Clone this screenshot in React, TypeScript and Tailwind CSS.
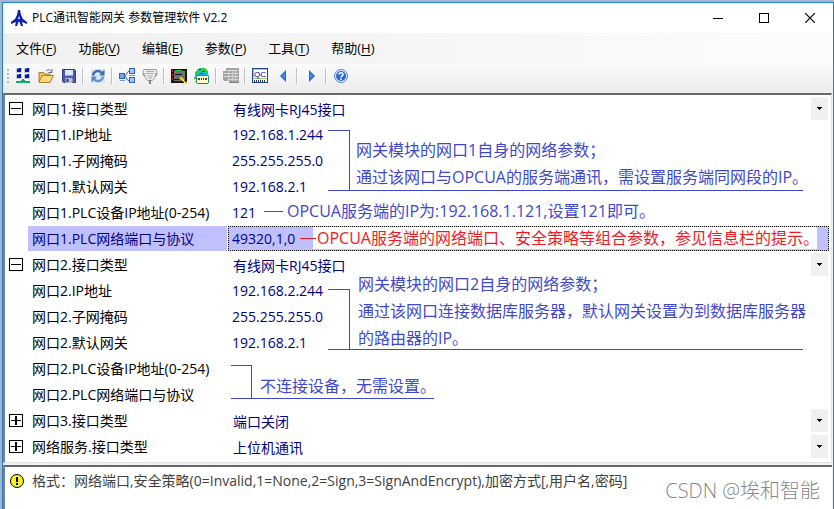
import React, { useState } from 'react'

type Row = {
  id: string
  name: string
  value: string
  kind: 'select' | 'text'
  open?: boolean
}

const rows: Row[] = [
  { id: 'p1-type', name: '网口1.接口类型', value: '有线网卡RJ45接口', kind: 'select', open: true },
  { id: 'p1-ip', name: '网口1.IP地址', value: '192.168.1.244', kind: 'text' },
  { id: 'p1-mask', name: '网口1.子网掩码', value: '255.255.255.0', kind: 'text' },
  { id: 'p1-gw', name: '网口1.默认网关', value: '192.168.2.1', kind: 'text' },
  { id: 'p1-plc', name: '网口1.PLC设备IP地址(0-254)', value: '121', kind: 'text' },
  { id: 'p1-port', name: '网口1.PLC网络端口与协议', value: '49320,1,0', kind: 'text' },
  { id: 'p2-type', name: '网口2.接口类型', value: '有线网卡RJ45接口', kind: 'select', open: true },
  { id: 'p2-ip', name: '网口2.IP地址', value: '192.168.2.244', kind: 'text' },
  { id: 'p2-mask', name: '网口2.子网掩码', value: '255.255.255.0', kind: 'text' },
  { id: 'p2-gw', name: '网口2.默认网关', value: '192.168.2.1', kind: 'text' },
  { id: 'p2-plc', name: '网口2.PLC设备IP地址(0-254)', value: '', kind: 'text' },
  { id: 'p2-port', name: '网口2.PLC网络端口与协议', value: '', kind: 'text' },
  { id: 'p3-type', name: '网口3.接口类型', value: '端口关闭', kind: 'select', open: false },
  { id: 'svc-type', name: '网络服务.接口类型', value: '上位机通讯', kind: 'select', open: false },
]

const menus = [
  { text: '文件', key: 'F' },
  { text: '功能', key: 'V' },
  { text: '编辑', key: 'E' },
  { text: '参数', key: 'P' },
  { text: '工具', key: 'T' },
  { text: '帮助', key: 'H' },
]

function Pixels({ children }: { children: React.ReactNode }) {
  return (
    <svg width="16" height="16" viewBox="0 0 16 16" shapeRendering="crispEdges" aria-hidden="true">
      {children}
    </svg>
  )
}

function Smooth({ children }: { children: React.ReactNode }) {
  return (
    <svg width="16" height="16" viewBox="0 0 16 16" fill="none" aria-hidden="true">
      {children}
    </svg>
  )
}

const NetworkIcon = () => (
  <Pixels>
    {[
      [1, 0],
      [9, 0],
      [1, 6],
      [9, 6],
    ].map(([x, y]) => (
      <g key={`${x}-${y}`}>
        <rect x={x} y={y} width="6" height="5" fill="#c4c8d4" />
        <rect x={x + 1} y={y} width="4" height="4" fill="#1414b4" />
        <rect x={x + 1} y={y} width="2" height="1" fill="#60a0ff" />
      </g>
    ))}
    <path d="M7 11h2v1h1v1h5v2H1v-2h5v-1h1z" fill="#18a868" />
  </Pixels>
)

const FolderIcon = () => (
  <Smooth>
    <path d="M1 14V4.5h4.5l1 1.5H12v2" fill="#f0c860" stroke="#a87820" />
    <path d="M1 14.5l3-7h11.5l-3.5 7z" fill="#fbd878" stroke="#b08028" />
    <path d="M8 3c2-2 4-1.500 5 .5M14 1v3.500h-3.500" stroke="#506890" />
  </Smooth>
)

const SaveIcon = () => (
  <Smooth>
    <path d="M1.500 1.500h12l1 1v12h-12l-1-1z" fill="#4e58b8" stroke="#343c90" />
    <path d="M4 2h8v5.500H4z" fill="#dce6f8" />
    <path d="M4.500 10h7v5h-7z" fill="#b8c0d0" />
    <path d="M5.500 11h2v3h-2z" fill="#30386c" />
  </Smooth>
)

const RefreshIcon = () => (
  <Smooth>
    <path d="M1 1h14v14H1z" fill="#dbe7f5" />
    <path d="M3 7.500a5 5 0 0 1 9-2.500" stroke="#3f70ae" strokeWidth="2.500" />
    <path d="M14.500 1.500v6H9z" fill="#3f70ae" />
    <path d="M13 8.500a5 5 0 0 1-9 2.500" stroke="#6796cc" strokeWidth="2.500" />
    <path d="M1.500 14.500v-6H7z" fill="#5585c0" />
  </Smooth>
)

const TopologyIcon = () => (
  <Smooth>
    <path d="M6 8.500l3-5h2M6 8.500l3 4h2" stroke="#3464b4" />
    <rect x=".5" y="5.500" width="5" height="5" fill="#78a4e8" stroke="#3464b4" />
    <rect x="10.500" y=".5" width="5" height="5" fill="#a4c4f4" stroke="#3464b4" />
    <rect x="10.500" y="9.500" width="5" height="5" fill="#a4c4f4" stroke="#3464b4" />
    <path d="M1 12.500h5M10 7.500h6" stroke="#7898cc" />
  </Smooth>
)

const PlugIcon = () => (
  <Smooth>
    <path d="M2 1.500h12l1 2v3l-2 1v2l-2.500 3h-5L3 9.500v-2l-2-1v-3z" fill="#eeeeee" stroke="#989898" />
    <path d="M4 3.500h8M4 5.500h8M5 8h6M6 10h4" stroke="#aaaaaa" />
    <path d="M8 12v4" stroke="#808080" strokeWidth="2" />
    <path d="M2 5v3M14 5v3" stroke="#6088b8" />
  </Smooth>
)

const BoardIcon = () => (
  <Pixels>
    <path d="M0 1h16v14H0z" fill="#181818" />
    <path d="M3 3h11v10H3z" fill="#707070" />
    <path d="M4 2h7v1H4zM12 3h2v2h-2z" fill="#20c040" />
    <path d="M1 2h1v2H1zM1 6h1v2H1zM1 10h1v2H1z" fill="#d02020" />
    <path d="M4 6h7v1H4zM3 11h5v1H3z" fill="#101010" />
    <path d="M9 9h2v1h1v1h1v1h1v1h1v1h1v2h-2v-1h-1v-1h-1v-1h-1v-1h-1v-1H9z" fill="#e8d830" />
    <path d="M13 12h1v1h1v1h-1v-1h-1z" fill="#806000" />
  </Pixels>
)

const GlobeIcon = () => (
  <Pixels>
    <path d="M5 0h6v1h2v2h1v4h1v3H1V5h1V3h1V1h2z" fill="#18b8e8" />
    <path d="M3 2h3v2H5v2H1V4h2zM7 0h4v1h2v2h1v3h-3V4H8V2H7z" fill="#20d830" />
    <path d="M5 1h2v1H5zM8 3h3v1H8zM6 5h4v1H6z" fill="#1040c0" />
    <path d="M3 7h10l1 2v6H3z" fill="#ffffc8" />
    <path d="M3 7h10v1H3zM3 15h11v1H3zM2 9h1v6H2zM14 9h1v6h-1z" fill="#308050" />
    <path d="M4 10h2v2H4zM7 10h1v2H7zM9 10h1v2H9zM11 10h2v2h-2z" fill="#405040" />
    <path d="M0 9h2v2H0zM1 13h2v1H1z" fill="#20d830" />
  </Pixels>
)

const SheetIcon = () => (
  <Pixels>
    <path d="M3 0h13v14H6v-1H1v-1H0V3h3z" fill="#a4a4a4" />
    <path d="M4 2h11v1H4zM1 5h14v1H1zM1 8h14v1H1zM5 11h10v1H5z" fill="#dcdcdc" />
    <path d="M5 3h1v10H5zM9 3h1v10H9zM12 3h1v10h-1z" fill="#cfcfcf" />
    <path d="M6 14h10v1H6z" fill="#808080" />
  </Pixels>
)

const QcIcon = () => (
  <svg width="16" height="16" viewBox="0 0 16 16" aria-hidden="true">
    <g shapeRendering="crispEdges">
      <path d="M0 0h16v15H0z" fill="#24488c" />
      <path d="M1 1h14v10H1z" fill="#a8d080" />
      <path d="M2 2h13v8H2z" fill="#ffffff" />
      <path d="M1 11h14v3H1z" fill="#f4f4f4" />
      <path d="M2 12h1v2H2zM4 12h1v2H4zM6 12h1v2H6zM8 12h1v2H8zM10 12h1v2h-1zM12 12h1v2h-1z" fill="#303848" />
    </g>
    <text x="8" y="9" textAnchor="middle" fontSize="8" fontFamily="Liberation Sans, sans-serif" fill="#000080">
      QC
    </text>
  </svg>
)

const PrevIcon = () => (
  <Smooth>
    <path d="M11 2v12L5 8z" fill="#2868dc" />
    <path d="M10 5v5L7 8z" fill="#4c94f4" />
  </Smooth>
)

const NextIcon = () => (
  <Smooth>
    <path d="M5 2v12l6-6z" fill="#2868dc" />
    <path d="M6 5v5l3-2z" fill="#4c94f4" />
  </Smooth>
)

const HelpIcon = () => (
  <Smooth>
    <circle cx="8" cy="8" r="6.500" fill="#e0ecfc" stroke="#5484d0" />
    <circle cx="8" cy="8" r="5" fill="#2868d0" />
    <path d="M6 6.500c0-2.500 4-2.500 4 0 0 1.300-2 1.300-2 3" stroke="#fff" strokeWidth="1.500" />
    <path d="M7.200 10.500h1.600v1.500H7.200z" fill="#fff" />
  </Smooth>
)

const toolGroups = [
  [
    { label: '网络', Icon: NetworkIcon },
    { label: '打开', Icon: FolderIcon },
    { label: '保存', Icon: SaveIcon },
  ],
  [{ label: '刷新', Icon: RefreshIcon }],
  [
    { label: '拓扑', Icon: TopologyIcon },
    { label: '串口', Icon: PlugIcon },
  ],
  [
    { label: '模块', Icon: BoardIcon },
    { label: '远程', Icon: GlobeIcon },
  ],
  [{ label: '表格', Icon: SheetIcon }],
  [
    { label: 'QC', Icon: QcIcon },
    { label: '上一个', Icon: PrevIcon },
  ],
  [{ label: '下一个', Icon: NextIcon }],
  [{ label: '关于', Icon: HelpIcon }],
]

function TitleBar() {
  return (
    <header className="flex h-[30px] items-center bg-white pl-2">
      <svg width="16" height="16" viewBox="0 0 16 16" aria-hidden="true">
        <path d="M7 0h2l1 5 2 4 4 3v2l-5-2 1 4h-2l-2-5-2 5H4l1-4-5 2v-2l4-3 2-4z" fill="#0c20b0" />
        <path d="M8 6l1 3H7z" fill="#fff" />
      </svg>
      <h1 className="flex-1 pl-[5px] text-[12px]">PLC通讯智能网关 参数管理软件 V2.2</h1>
      <div className="flex h-full">
        <button aria-label="最小化" className="flex w-[46px] items-center justify-center">
          <svg width="10" height="10" shapeRendering="crispEdges">
            <path d="M0 5h10v1H0z" />
          </svg>
        </button>
        <button aria-label="最大化" className="flex w-[46px] items-center justify-center">
          <svg width="10" height="10" fill="none" stroke="#000">
            <rect x=".5" y=".5" width="9" height="9" />
          </svg>
        </button>
        <button aria-label="关闭" className="flex w-[46px] items-center justify-center">
          <svg width="10" height="10" stroke="#000" strokeWidth="1.200">
            <path d="M0 0l10 10M10 0L0 10" />
          </svg>
        </button>
      </div>
    </header>
  )
}

function MenuBar() {
  return (
    <nav className="flex h-[31px] items-center gap-[22px] bg-gradient-to-r from-[#f0f0f0] to-[#fcfcfc] pb-px pl-[13px] text-[13px]">
      {menus.map((m) => (
        <button key={m.key} className="whitespace-nowrap">
          {m.text}(<span className="underline underline-offset-2">{m.key}</span>)
        </button>
      ))}
    </nav>
  )
}

function ToolBar() {
  return (
    <div role="toolbar" className="flex h-[29px] items-center bg-gradient-to-b from-[#fbfbfb] to-[#ebebeb] pb-[6px] pl-1">
      <span className="mr-[2px] h-[14px] w-[2px] border-l-2 border-dotted border-[#b4b4b4]" />
      {toolGroups.map((group, i) => (
        <div key={i} className="flex items-center">
          {i > 0 && <span className="mx-[2px] h-4 w-[2px] border-r border-white bg-[#c0c0c0]" />}
          {group.map(({ label, Icon }) => (
            <button key={label} aria-label={label} className="flex w-[23px] justify-center">
              <Icon />
            </button>
          ))}
        </div>
      ))}
    </div>
  )
}

function Toggle({ open, label }: { open: boolean; label: string }) {
  return (
    <button aria-label={label} aria-expanded={open} className="block">
      <svg width="14" height="13" shapeRendering="crispEdges" fill="none" stroke="#000">
        <rect x=".5" y=".5" width="13" height="12" />
        <path d="M2 6.500h10" />
        {!open && <path d="M7 2v9" strokeWidth="2" />}
      </svg>
    </button>
  )
}

function GridRow({ row, selected, onSelect }: { row: Row; selected: boolean; onSelect: () => void }) {
  return (
    <div className="flex h-[26px] pb-px" onClick={onSelect}>
      <div className="flex w-[23px] shrink-0 items-center pl-1">
        {row.kind === 'select' && <Toggle open={!!row.open} label={row.name} />}
      </div>
      <label
        htmlFor={row.id}
        className={`flex w-[199px] shrink-0 items-center pl-1 whitespace-nowrap ${
          selected ? 'bg-[#c0c0ff] text-[#000080]' : 'text-black'
        }`}
      >
        {row.name}
      </label>
      <div
        className={`ml-px flex min-w-0 flex-1 items-center border pl-[3px] text-[#000080] ${
          selected ? 'border-dotted border-black bg-[#c0c0ff]' : 'border-transparent'
        }`}
      >
        {row.kind === 'select' ? (
          <div className="relative h-full w-full">
            <select id={row.id} className="h-full w-full appearance-none bg-transparent pt-[2px] pl-px outline-none">
              <option>{row.value}</option>
            </select>
            <span className="pointer-events-none absolute inset-y-0 right-0 flex w-[17px] items-center justify-center bg-[#f0f0f0]">
              <svg width="5" height="3" shapeRendering="crispEdges">
                <path d="M0 0h5v1H4v1H3v1H2V2H1V1H0z" />
              </svg>
            </span>
          </div>
        ) : (
          <input id={row.id} defaultValue={row.value} className="h-full w-full bg-transparent outline-none" />
        )}
      </div>
    </div>
  )
}

/* Remarks drawn over the grid */
function Notes() {
  return (
    <div className="pointer-events-none absolute inset-0 text-[16px] leading-[27px] whitespace-nowrap text-[#3f48cc]">
      <div className="absolute top-[35px] left-[323px] flex h-[61px] w-[475px] border-b border-[#3f48cc]">
        <span className="w-[22px] shrink-0 border-t border-r border-[#3f48cc]" />
        <p className="pt-[7px] pl-[6px]">
          网关模块的网口1自身的网络参数；
          <br />
          通过该网口与OPCUA的服务端通讯，需设置服务端同网段的IP。
        </p>
      </div>
      <div className="absolute top-[103px] left-[259px] flex items-center gap-1">
        <span className="h-px w-[19px] bg-[#3f48cc]" />
        <p>OPCUA服务端的IP为:192.168.1.121,设置121即可。</p>
      </div>
      <div className="absolute top-[132px] left-[308px] flex h-[22px] w-[504px] items-center bg-white text-[#ed1c24]">
        <p className="pl-1">OPCUA服务端的网络端口、安全策略等组合参数，参见信息栏的提示。</p>
      </div>
      <span className="absolute top-[143px] left-[295px] h-px w-4 bg-[#ed1c24]" />
      <div className="absolute top-[194px] left-[323px] flex h-[61px] w-[475px] border-b border-[#3f48cc]">
        <span className="w-[22px] shrink-0 border-t border-r border-[#3f48cc]" />
        <p className="-mt-[18px] pl-2">
          网关模块的网口2自身的网络参数；
          <br />
          通过该网口连接数据库服务器，默认网关设置为到数据库服务器
          <br />
          的路由器的IP。
        </p>
      </div>
      <div className="absolute top-[270px] left-[226px] flex h-[34px] w-[203px] border-b border-[#3f48cc]">
        <span className="w-[21px] shrink-0 border-t border-r border-[#3f48cc]" />
        <p className="pt-2 pl-2">不连接设备，无需设置。</p>
      </div>
    </div>
  )
}

export default function App() {
  const [selected, setSelected] = useState('p1-port')

  return (
    <div className="relative flex min-h-screen flex-col overflow-hidden border-t-2 border-l-2 border-[#a9b5c6] bg-[#f0f0f0] font-['Open_Sans','Noto_Sans_CJK_SC',sans-serif] text-[14px] leading-5 text-black">
      <div className="flex flex-1 flex-col border-t border-r border-l border-[#1883d7]">
        <TitleBar />
        <MenuBar />
        <ToolBar />
        <main className="relative mr-px border-t-2 border-r border-b border-l-2 border-t-[#696969] border-r-[#e3e3e3] border-b-[#e3e3e3] border-l-[#808080] bg-white pt-px pr-[2px] pb-[2px]">
          {rows.map((row) => (
            <GridRow key={row.id} row={row} selected={row.id === selected} onSelect={() => setSelected(row.id)} />
          ))}
          <Notes />
        </main>
        <footer className="mt-[2px] mr-px flex flex-1 items-start justify-between border-t-2 border-l-2 border-t-[#696969] border-l-[#808080] bg-white pt-1 pr-3 pl-[5px] whitespace-nowrap">
          <div className="flex items-center gap-2">
            <svg width="14" height="14" viewBox="0 0 14 14" aria-hidden="true">
              <circle cx="7" cy="7" r="6.500" fill="#f8f020" stroke="#000" />
              <path d="M6 3h2v5H6zM6 9h2v2H6z" />
            </svg>
            <p className="text-[#404040]">
              格式：网络端口,安全策略(0=Invalid,1=None,2=Sign,3=SignAndEncrypt),加密方式[,用户名,密码]
            </p>
          </div>
          <p className="pt-[10px] text-[20px] font-light text-[#888888]">CSDN @埃和智能</p>
        </footer>
      </div>
    </div>
  )
}
